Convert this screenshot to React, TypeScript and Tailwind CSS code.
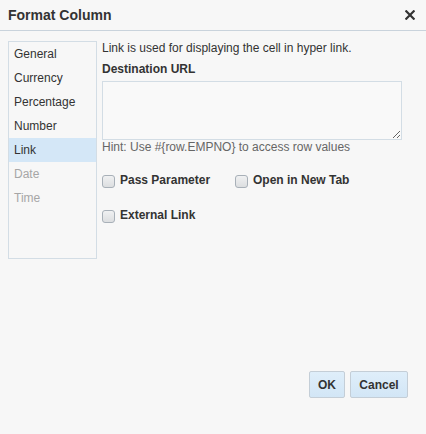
import React from "react";

const formats = [
  { label: "General" },
  { label: "Currency" },
  { label: "Percentage" },
  { label: "Number" },
  { label: "Link", selected: true },
  { label: "Date", disabled: true },
  { label: "Time", disabled: true },
];

function Check({ label }: { label: string }) {
  return (
    <label className="flex items-center h-[16px]">
      <span className="w-[13px] h-[13px] mt-[3px] rounded-[3px] border border-[#a8b0b8] bg-gradient-to-b from-[#f0f1f2] to-[#dcdee0]" />
      <span className="ml-[5px] font-bold text-[#333333]">{label}</span>
    </label>
  );
}

export default function App() {
  return (
    <div
      className="w-[426px] h-[434px] bg-[#f7f7f7] flex flex-col text-[12px] leading-[14px] text-[#333333]"
      style={{ fontFamily: '"Liberation Sans", Arial, sans-serif' }}
    >
      <div className="h-[31px] shrink-0 flex items-center justify-between pl-[8px] pr-[11px] border-b border-[#c9d3dc]">
        <span className="text-[14px] font-bold text-[#333333]">Format Column</span>
        <svg width="10" height="10" viewBox="0 0 10 10">
          <path d="M1.3 1.3 L8.7 8.7 M8.7 1.3 L1.3 8.7" stroke="#333333" strokeWidth="2.2" strokeLinecap="square" />
        </svg>
      </div>

      <div className="flex-1 flex pt-[10px] pl-[8px]">
        <ul className="w-[89px] h-[218px] border border-[#d3dde5] bg-[#f7f7f7]">
          {formats.map((f) => (
            <li
              key={f.label}
              className={
                "h-[24px] flex items-center pl-[5px] " +
                (f.selected ? "bg-[#d4e7f7] " : "") +
                (f.disabled ? "text-[#a6a6a6]" : "text-[#333333]")
              }
            >
              {f.label}
            </li>
          ))}
        </ul>

        <div className="ml-[5px] w-[300px] flex flex-col">
          <p>Link is used for displaying the cell in hyper link.</p>
          <p className="mt-[7px] font-bold">Destination URL</p>
          <textarea className="mt-[5px] h-[59px] w-full border border-[#d3dde5] bg-[#f9f9f9] outline-none" />
          <p className="text-[#666666]">Hint: Use #{"{"}row.EMPNO{"}"} to access row values</p>
          <div className="mt-[18px] flex">
            <div className="w-[133px]">
              <Check label="Pass Parameter" />
            </div>
            <Check label="Open in New Tab" />
          </div>
          <div className="mt-[19px] flex">
            <Check label="External Link" />
          </div>
        </div>
      </div>

      <div className="flex justify-end gap-[5px] pr-[18px] pb-[36px]">
        <button className="w-[36px] h-[27px] rounded-[2px] border border-[#c4ced7] bg-gradient-to-b from-[#dfeefa] to-[#d2e6f6] font-bold text-[#333333]">
          OK
        </button>
        <button className="w-[58px] h-[27px] rounded-[2px] border border-[#c4ced7] bg-gradient-to-b from-[#dfeefa] to-[#d2e6f6] font-bold text-[#333333]">
          Cancel
        </button>
      </div>
    </div>
  );
}
